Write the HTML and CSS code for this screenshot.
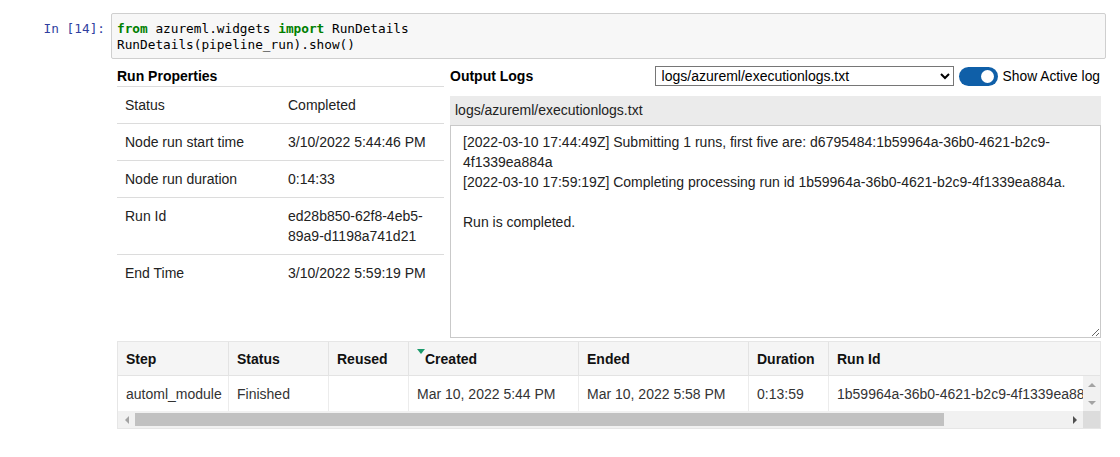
FILE: index.html
```html
<!DOCTYPE html>
<html>
<head>
<meta charset="utf-8">
<link rel="stylesheet" href="styles.css">
</head>
<body>
<div class="cell">
  <div class="prompt">In [14]:</div>
  <div class="code"><span class="kw">from</span> azureml.widgets <span class="kw">import</span> RunDetails<br>RunDetails(pipeline_run).show()</div>
</div>
<div class="widget">
  <div class="top">
    <div class="props">
      <div class="title">Run Properties</div>
      <table class="ptable">
        <tr><td class="lbl">Status</td><td class="val">Completed</td></tr>
        <tr><td class="lbl">Node run start time</td><td class="val">3/10/2022 5:44:46 PM</td></tr>
        <tr><td class="lbl">Node run duration</td><td class="val">0:14:33</td></tr>
        <tr><td class="lbl">Run Id</td><td class="val">ed28b850-62f8-4eb5-89a9-d1198a741d21</td></tr>
        <tr><td class="lbl">End Time</td><td class="val">3/10/2022 5:59:19 PM</td></tr>
      </table>
    </div>
    <div class="logs">
      <div class="logs-bar">
        <div class="title">Output Logs</div>
        <div class="controls">
          <select class="sel"><option>logs/azureml/executionlogs.txt</option></select>
          <span class="toggle"><span class="knob"></span></span>
          <span class="toggle-label">Show Active log</span>
        </div>
      </div>
      <div class="log-head">logs/azureml/executionlogs.txt</div>
      <textarea class="log-body" readonly>[2022-03-10 17:44:49Z] Submitting 1 runs, first five are: d6795484:1b59964a-36b0-4621-b2c9-4f1339ea884a
[2022-03-10 17:59:19Z] Completing processing run id 1b59964a-36b0-4621-b2c9-4f1339ea884a.

Run is completed.</textarea>
    </div>
  </div>
  <div class="grid">
    <div class="grid-head">
      <div class="hc w-step">Step</div>
      <div class="hc w-status">Status</div>
      <div class="hc w-reused">Reused</div>
      <div class="hc w-created"><span class="sort"></span>Created</div>
      <div class="hc w-ended">Ended</div>
      <div class="hc w-dur">Duration</div>
      <div class="hc w-run">Run Id</div>
    </div>
    <div class="viewport">
      <div class="vp-main">
        <div class="grid-row">
          <div class="dc w-step">automl_module</div>
          <div class="dc w-status">Finished</div>
          <div class="dc w-reused"></div>
          <div class="dc w-created">Mar 10, 2022 5:44 PM</div>
          <div class="dc w-ended">Mar 10, 2022 5:58 PM</div>
          <div class="dc w-dur">0:13:59</div>
          <div class="dc w-run">1b59964a-36b0-4621-b2c9-4f1339ea884a</div>
        </div>
        <div class="hscroll">
          <div class="sb-btn"><span class="arr-left"></span></div>
          <div class="hs-track"><div class="hs-thumb"></div></div>
          <div class="sb-btn"><span class="arr-right"></span></div>
        </div>
      </div>
      <div class="vscroll">
        <div class="vs-area">
          <div class="vs-btn"><span class="arr-up"></span></div>
          <div class="vs-btn"><span class="arr-down"></span></div>
        </div>
        <div class="corner"></div>
      </div>
    </div>
  </div>
</div>
</body>
</html>
```
FILE: styles.css
```css
html, body {
  margin: 0;
  padding: 0;
  background: #fff;
  font-family: "Liberation Sans", Arial, sans-serif;
  color: #000;
}

.cell {
  display: flex;
  padding-top: 13px;
}

.prompt {
  width: 111px;
  box-sizing: border-box;
  padding-right: 6px;
  padding-top: 8px;
  text-align: right;
  font-family: "DejaVu Sans Mono", monospace;
  font-size: 12.75px;
  line-height: 16px;
  color: #303f9f;
}

.code {
  flex: 1;
  margin-right: 14px;
  border: 1px solid #cfcfcf;
  border-radius: 2px;
  background: #f7f7f7;
  padding: 7px 5px 5px 5px;
  font-family: "DejaVu Sans Mono", monospace;
  font-size: 12.75px;
  line-height: 16px;
  color: #000;
}

.kw {
  color: #008000;
  font-weight: bold;
}

.widget {
  margin-left: 117px;
  width: 984px;
  margin-top: 7px;
}

.top {
  display: flex;
  gap: 6px;
}

.props {
  width: 327px;
  flex: none;
}

.title {
  font-weight: bold;
  font-size: 14px;
  line-height: 20px;
  height: 20px;
  color: #000;
}

.ptable {
  width: 327px;
  border-collapse: collapse;
  border-top: 1px solid #dcdcdc;
  font-size: 14px;
  line-height: 20px;
}

.ptable td {
  padding: 8px 8px 8px 8px;
  vertical-align: top;
  border-bottom: 1px solid #dcdcdc;
  color: #222;
}

.ptable tr:last-child td {
  border-bottom: none;
}

.lbl {
  width: 147px;
}

.val {
  color: #333;
}

.logs {
  flex: 1;
  min-width: 0;
}

.logs-bar {
  display: flex;
  justify-content: space-between;
  align-items: center;
  height: 20px;
}

.controls {
  display: flex;
  align-items: center;
  gap: 5px;
  margin-right: 1px;
}

.sel {
  width: 299px;
  height: 20px;
  box-sizing: border-box;
  border: 1px solid #767676;
  border-radius: 0;
  background: #fff;
  font-family: "Liberation Sans", Arial, sans-serif;
  font-size: 14px;
  color: #000;
  padding: 0 2px;
  margin: 0;
}

.toggle {
  display: flex;
  align-items: center;
  justify-content: flex-end;
  width: 39px;
  height: 19px;
  box-sizing: border-box;
  padding-right: 4px;
  border-radius: 10px;
  background: #0f5fa8;
}

.knob {
  width: 13px;
  height: 13px;
  border-radius: 50%;
  background: #fff;
}

.toggle-label {
  font-size: 13.8px;
  color: #000;
}

.log-head {
  margin-top: 10px;
  height: 29px;
  line-height: 29px;
  background: #ebebeb;
  padding-left: 5px;
  font-size: 14px;
  color: #222;
}

.log-body {
  display: block;
  width: 100%;
  height: 213px;
  box-sizing: border-box;
  margin: 0;
  border: 1px solid #c9c9c9;
  padding: 6px 12px;
  font-family: "Liberation Sans", Arial, sans-serif;
  font-size: 14px;
  line-height: 20px;
  color: #222;
  background: #fff;
  overflow: hidden;
  outline: none;
}

.grid {
  margin-top: 3px;
  width: 984px;
  box-sizing: border-box;
  border: 1px solid #e6e6e6;
  font-size: 14px;
  overflow: hidden;
}

.grid-head {
  display: flex;
  height: 33px;
  background: #f5f5f5;
  border-bottom: 1px solid #e3e3e3;
  overflow: hidden;
}

.hc {
  display: flex;
  align-items: center;
  flex: none;
  box-sizing: border-box;
  padding-left: 8px;
  border-right: 1px solid #e3e3e3;
  font-weight: bold;
  color: #111;
  white-space: nowrap;
}

.hc.w-run {
  border-right: none;
  flex: 1;
}

.sort {
  width: 0;
  height: 0;
  border-left: 4.5px solid transparent;
  border-right: 4.5px solid transparent;
  border-top: 5px solid #1b9a6b;
  margin-bottom: 14px;
}

.w-step { width: 111px; }
.w-status { width: 100px; }
.w-reused { width: 80px; }
.w-created { width: 170px; }
.w-ended { width: 170px; }
.w-dur { width: 80px; }
.w-run { width: 270px; }

.viewport {
  display: flex;
}

.vp-main {
  flex: 1;
  min-width: 0;
}

.grid-row {
  display: flex;
  height: 35px;
  overflow: hidden;
  background: #fff;
}

.dc {
  display: flex;
  align-items: center;
  flex: none;
  box-sizing: border-box;
  padding-left: 8px;
  border-right: 1px solid #ececec;
  color: #333;
  white-space: nowrap;
  overflow: hidden;
}

.dc.w-run {
  border-right: none;
}

.hscroll {
  display: flex;
  height: 17px;
  background: #f1f1f1;
}

.sb-btn {
  width: 17px;
  flex: none;
  display: flex;
  align-items: center;
  justify-content: center;
}

.hs-track {
  flex: 1;
  display: flex;
  align-items: center;
}

.hs-thumb {
  width: 809px;
  height: 13px;
  background: #c1c1c1;
}

.arr-left {
  width: 0;
  height: 0;
  border-top: 4px solid transparent;
  border-bottom: 4px solid transparent;
  border-right: 4px solid #a3a3a3;
}

.arr-right {
  width: 0;
  height: 0;
  border-top: 4px solid transparent;
  border-bottom: 4px solid transparent;
  border-left: 4px solid #505050;
}

.vscroll {
  width: 17px;
  flex: none;
  display: flex;
  flex-direction: column;
}

.vs-area {
  height: 35px;
  background: #f1f1f1;
  display: flex;
  flex-direction: column;
  justify-content: space-between;
}

.vs-btn {
  height: 17px;
  display: flex;
  align-items: center;
  justify-content: center;
}

.arr-up {
  width: 0;
  height: 0;
  border-left: 4px solid transparent;
  border-right: 4px solid transparent;
  border-bottom: 4px solid #a3a3a3;
}

.arr-down {
  width: 0;
  height: 0;
  border-left: 4px solid transparent;
  border-right: 4px solid transparent;
  border-top: 4px solid #a3a3a3;
}

.corner {
  height: 17px;
  background: #dcdcdc;
}
```
